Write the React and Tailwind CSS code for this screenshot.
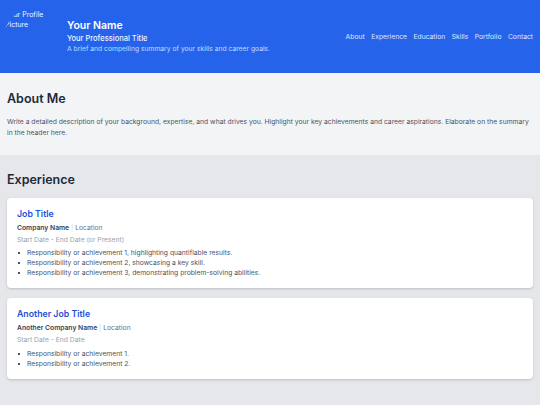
const NAV = ["About", "Experience", "Education", "Skills", "Portfolio", "Contact"];

const JOBS = [
  {
    title: "Job Title",
    company: "Company Name",
    dates: "Start Date - End Date (or Present)",
    points: [
      "Responsibility or achievement 1, highlighting quantifiable results.",
      "Responsibility or achievement 2, showcasing a key skill.",
      "Responsibility or achievement 3, demonstrating problem-solving abilities.",
    ],
  },
  {
    title: "Another Job Title",
    company: "Another Company Name",
    dates: "Start Date - End Date",
    points: ["Responsibility or achievement 1.", "Responsibility or achievement 2."],
  },
];

function JobCard({ job }) {
  return (
    <div className="bg-white rounded-[4px] shadow-[0_1px_3px_rgba(0,0,0,0.12),0_1px_2px_rgba(0,0,0,0.06)] px-[10px] pt-[10px] pb-[10px]">
      <h3 className="text-[8.75px] leading-[12px] font-semibold text-[#1d4ed8] mb-[3px]">{job.title}</h3>
      <p className="text-[6.75px] leading-[10px] text-gray-500 mb-[2px]">
        <span className="font-semibold text-gray-700">{job.company}</span>
        <span className="text-gray-300"> | </span>
        Location
      </p>
      <p className="text-[6.75px] leading-[10px] text-gray-400 mb-[3.5px]">{job.dates}</p>
      <ul>
        {job.points.map((p) => (
          <li key={p} className="flex items-center text-[6.75px] leading-[10px] text-gray-600">
            <span className="w-[2px] h-[2px] bg-gray-600 ml-[0.5px] mr-[7.5px] shrink-0" />
            {p}
          </li>
        ))}
      </ul>
    </div>
  );
}

export default function App() {
  return (
    <div className="w-[540px] h-[405px] overflow-hidden bg-gray-200 font-['Inter',sans-serif]">
      <header className="h-[73px] bg-[#2563eb] flex items-center justify-between pl-[4px] pr-[7px]">
        <div className="flex items-center">
          <div className="w-[56px] h-[56px] rounded-full overflow-hidden shrink-0 mr-[7px] pt-[1.5px] pl-[1px] text-[7px] leading-[10px] text-blue-50">
            Your Profile Picture
          </div>
          <div>
            <h1 className="text-[10.5px] leading-[14px] font-semibold text-white mb-[1px]">Your Name</h1>
            <p className="text-[7.5px] leading-[10px] font-medium text-blue-50">Your Professional Title</p>
            <p className="text-[6.75px] leading-[10px] text-blue-200">
              A brief and compelling summary of your skills and career goals.
            </p>
          </div>
        </div>
        <nav className="flex gap-[6.5px] text-[6.75px] leading-[10px] text-blue-100 mt-[1px]">
          {NAV.map((n) => (
            <span key={n}>{n}</span>
          ))}
        </nav>
      </header>

      <section className="bg-gray-100 px-[7px] pt-[17.5px] pb-[17px]">
        <h2 className="text-[12.5px] leading-[16px] font-semibold text-gray-800 mb-[10.5px]">About Me</h2>
        <p className="text-[6.75px] leading-[10.5px] text-gray-600">
          Write a detailed description of your background, expertise, and what drives you. Highlight your key
          achievements and career aspirations. Elaborate on the summary in the header here.
        </p>
      </section>

      <section className="px-[7px] pt-[16.5px]">
        <h2 className="text-[12.5px] leading-[16px] font-semibold text-gray-800 mb-[10px]">Experience</h2>
        <div className="flex flex-col gap-[10px]">
          {JOBS.map((j) => (
            <JobCard key={j.title} job={j} />
          ))}
        </div>
      </section>
    </div>
  );
}
